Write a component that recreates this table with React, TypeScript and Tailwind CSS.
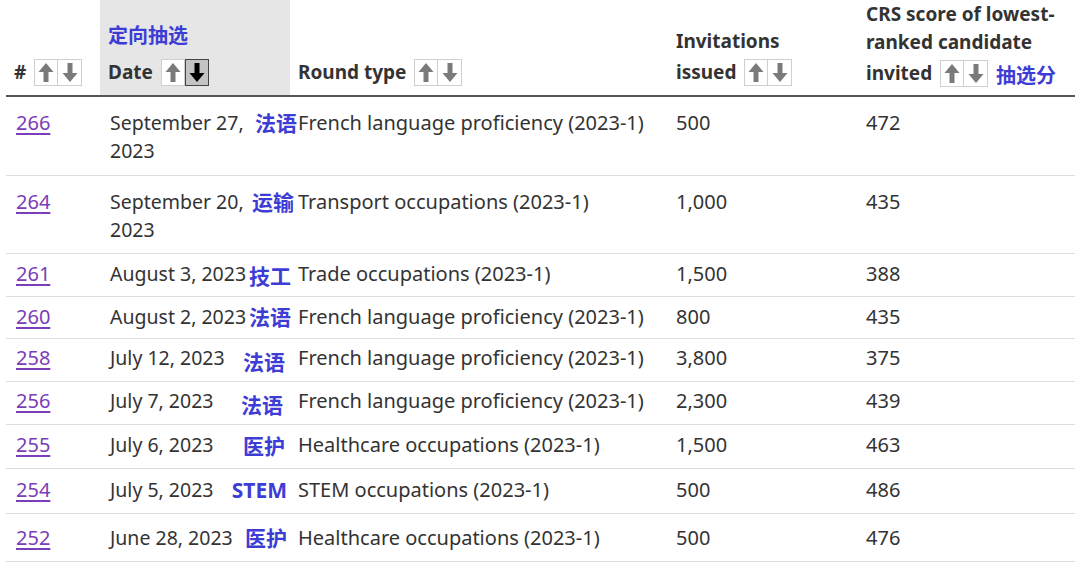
import React from 'react';

type Row = {
  id: string;
  date: string;
  tag: string;
  round: string;
  invites: string;
  crs: string;
  h: string;
  pt: string;
  tagCls: string;
};

const rows: Row[] = [
  { id: '266', date: 'September 27,\n2023', tag: '法语', round: 'French language proficiency (2023-1)', invites: '500', crs: '472', h: 'h-[79px]', pt: 'pt-[12px]', tagCls: '-mr-[7px]' },
  { id: '264', date: 'September 20,\n2023', tag: '运输', round: 'Transport occupations (2023-1)', invites: '1,000', crs: '435', h: 'h-[78px]', pt: 'pt-[12px]', tagCls: '-mr-[4px]' },
  { id: '261', date: 'August 3, 2023', tag: '技工', round: 'Trade occupations (2023-1)', invites: '1,500', crs: '388', h: 'h-[43px]', pt: 'pt-[6px]', tagCls: 'mt-[2px]' },
  { id: '260', date: 'August 2, 2023', tag: '法语', round: 'French language proficiency (2023-1)', invites: '800', crs: '435', h: 'h-[42px]', pt: 'pt-[6px]', tagCls: '' },
  { id: '258', date: 'July 12, 2023', tag: '法语', round: 'French language proficiency (2023-1)', invites: '3,800', crs: '375', h: 'h-[43px]', pt: 'pt-[5px]', tagCls: 'mt-[4px] mr-[5px]' },
  { id: '256', date: 'July 7, 2023', tag: '法语', round: 'French language proficiency (2023-1)', invites: '2,300', crs: '439', h: 'h-[43px]', pt: 'pt-[5px]', tagCls: 'mt-[4px] mr-[7px]' },
  { id: '255', date: 'July 6, 2023', tag: '医护', round: 'Healthcare occupations (2023-1)', invites: '1,500', crs: '463', h: 'h-[44px]', pt: 'pt-[6px]', tagCls: 'mt-[1px] mr-[5px]' },
  { id: '254', date: 'July 5, 2023', tag: 'STEM', round: 'STEM occupations (2023-1)', invites: '500', crs: '486', h: 'h-[45px]', pt: 'pt-[7px]', tagCls: 'mr-[3px]' },
  { id: '252', date: 'June 28, 2023', tag: '医护', round: 'Healthcare occupations (2023-1)', invites: '500', crs: '476', h: 'h-[48px]', pt: 'pt-[10px]', tagCls: 'mr-[3px]' },
];

function Arrow({ down, color }: { down?: boolean; color: string }) {
  return (
    <svg width="16" height="21" viewBox="0 0 16 21" className={down ? 'rotate-180' : ''}>
      <path d="M8 1 L15.5 10 H10.5 V20 H5.5 V10 H0.5 Z" fill={color} />
    </svg>
  );
}

function SortBtns({ active }: { active?: 'up' | 'down' }) {
  return (
    <span className="inline-flex align-middle ml-[3px] -mt-[3px]">
      <span
        className={`w-[24px] h-[27px] flex items-center justify-center border ${
          active === 'up' ? 'bg-[#c4c4c4] border-[#444]' : 'bg-white border-[#cfcfcf]'
        }`}
      >
        <Arrow color={active === 'up' ? '#000' : '#7a7a7a'} />
      </span>
      <span
        className={`w-[24px] h-[27px] flex items-center justify-center border ${
          active === 'down' ? 'bg-[#c4c4c4] border-[#444]' : 'bg-white border-[#cfcfcf] border-l-0'
        }`}
      >
        <Arrow down color={active === 'down' ? '#000' : '#7a7a7a'} />
      </span>
    </span>
  );
}

export default function App() {
  return (
    <div
      className="w-[1080px] h-[566px] bg-white overflow-hidden text-[#333] text-[20px] leading-[28px]"
      style={{ fontFamily: '"Noto Sans", "Noto Sans CJK SC", sans-serif' }}
    >
      <table className="ml-[6px] w-[1069px] border-collapse table-fixed">
        <colgroup>
          <col className="w-[94px]" />
          <col className="w-[190px]" />
          <col className="w-[378px]" />
          <col className="w-[190px]" />
          <col className="w-[217px]" />
        </colgroup>
        <thead>
          <tr className="h-[96px] border-b-2 border-[#555]">
            <th className="align-bottom text-left font-bold px-[8px] pb-[9px] text-[19px]">
              # <SortBtns />
            </th>
            <th className="align-bottom text-left font-bold pl-[8px] pr-0 pb-[9px] bg-[#e6e6e6] text-[19px]">
              <div className="text-[#3d3dd6] text-[20px] mb-[8px]">定向抽选</div>
              Date <SortBtns active="down" />
            </th>
            <th className="align-bottom text-left font-bold px-[8px] pb-[9px] text-[19px]">
              Round type <SortBtns />
            </th>
            <th className="align-bottom text-left font-bold px-[8px] pb-[9px] text-[19px]">
              <div className="mb-[3px]">Invitations</div>
              issued <SortBtns />
            </th>
            <th className="align-bottom text-left font-bold px-[8px] pb-[8px] whitespace-nowrap text-[19px]">
              <div>CRS score of lowest-</div>
              <div className="mb-[3px]">ranked candidate</div>
              invited <SortBtns />
              <span className="ml-[8px] text-[#3d3dd6] text-[20px] relative top-[3px]">抽选分</span>
            </th>
          </tr>
        </thead>
        <tbody>
          {rows.map((r) => (
            <tr key={r.id} className={`${r.h} border-b border-[#dddddd]`}>
              <td className={`align-top px-[10px] ${r.pt}`}>
                <a href="#" className="text-[#7b3db8] underline underline-offset-[3px]">
                  {r.id}
                </a>
              </td>
              <td className={`align-top pl-[10px] pr-0 ${r.pt}`}>
                <div className="flex justify-between gap-[3px] text-[19.5px]">
                  <span className="whitespace-pre">{r.date}</span>
                  <span className={`shrink-0 font-bold text-[#3d3dd6] text-[21px] ${r.tagCls}`}>{r.tag}</span>
                </div>
              </td>
              <td className={`align-top px-[8px] ${r.pt}`}>{r.round}</td>
              <td className={`align-top px-[8px] ${r.pt}`}>{r.invites}</td>
              <td className={`align-top px-[8px] ${r.pt}`}>{r.crs}</td>
            </tr>
          ))}
        </tbody>
      </table>
    </div>
  );
}
